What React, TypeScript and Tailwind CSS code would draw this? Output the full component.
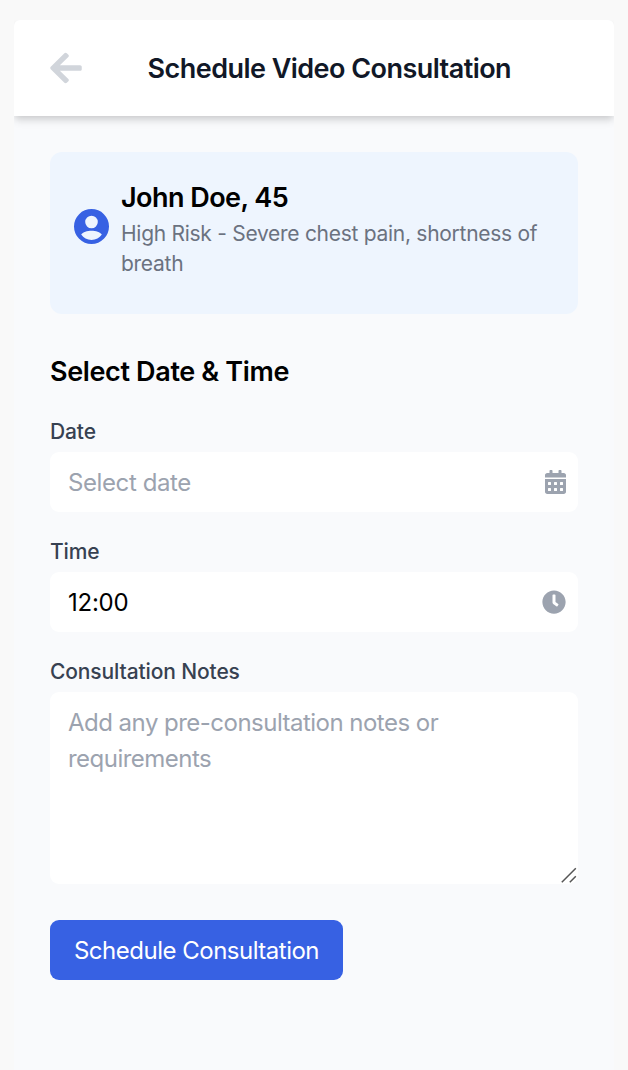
import { FaArrowLeft, FaCalendarAlt, FaClock } from "react-icons/fa";
import type { ReactNode } from "react";

function AccountIcon() {
  return (
    <svg viewBox="2 2 20 20" className="h-[35px] w-[35px] shrink-0 fill-[#3761e3]" aria-hidden="true">
      <path
        fillRule="evenodd"
        d="M12 2a10 10 0 1 0 0 20 10 10 0 0 0 0-20zM12 5.8a3.6 3.6 0 1 1 0 7.2 3.6 3.6 0 0 1 0-7.2zM6.1 16.6C7 15.1 9.6 14.4 12 14.4s5 .7 5.9 2.2C16.6 18.6 14.5 19.7 12 19.7s-4.6-1.1-5.9-3.1z"
      />
    </svg>
  );
}

function Field({ label, children }: { label: string; children: ReactNode }) {
  return (
    <label className="block">
      <span className="mb-[5px] block pt-px text-[21px] leading-[30px] font-medium tracking-[-0.12px] text-[#374151]">
        {label}
      </span>
      {children}
    </label>
  );
}

export default function App() {
  return (
    <div className="h-[1070px] overflow-hidden bg-[#f9f9f9] px-3.5 pt-5 font-['Inter',sans-serif] text-black">
      <div className="h-full rounded-t-[6px] bg-[#f9fafc]">
        <header className="flex h-24 items-center rounded-t-[6px] bg-white px-9 shadow-[0_6px_9px_-1.5px_rgba(0,0,0,0.1),0_3px_6px_-1.5px_rgba(0,0,0,0.1)] [clip-path:inset(0_0_-24px_0)]">
          <FaArrowLeft className="h-9 w-8 shrink-0 text-[#d1d5db]" />
          <h1 className="ml-[65.5px] pt-0.5 text-[27px] leading-[42px] font-semibold tracking-[-0.54px] whitespace-nowrap text-[#111827]">
            Schedule Video Consultation
          </h1>
        </header>
        <main className="px-9 pt-9">
          <section className="flex h-[162px] items-start rounded-xl bg-[#eef5fe] px-6 pt-6">
            <div className="pt-[33px]">
              <AccountIcon />
            </div>
            <div className="ml-3 pt-px">
              <h2 className="text-[27px] leading-[42px] font-semibold tracking-[-0.54px]">John Doe, 45</h2>
              <p className="text-[21px] leading-[30px] tracking-[-0.28px] text-[#6b7280]">
                High Risk - Severe chest pain, shortness of breath
              </p>
            </div>
          </section>
          <h2 className="mt-9 mb-[23px] pt-px text-[27px] leading-[42px] font-semibold tracking-[-0.36px]">
            Select Date &amp; Time
          </h2>
          <form className="flex flex-col gap-6">
            <Field label="Date">
              <span className="flex h-[60px] items-center rounded-[9px] bg-white pr-3 pl-[18px]">
                <input
                  placeholder="Select date"
                  className="min-w-0 flex-1 pt-0.5 text-[24px] leading-9 tracking-[-0.4px] outline-none placeholder:text-[#9ca3af]"
                />
                <FaCalendarAlt className="h-6 w-[21px] text-[#9ca3af]" />
              </span>
            </Field>
            <Field label="Time">
              <span className="flex h-[60px] items-center rounded-[9px] bg-white pr-3 pl-[18px]">
                <input
                  defaultValue="12:00"
                  className="min-w-0 flex-1 pt-0.5 text-[24px] leading-9 tracking-[-0.25px] outline-none"
                />
                <FaClock className="h-6 w-6 text-[#9ca3af]" />
              </span>
            </Field>
            <Field label="Consultation Notes">
              <span className="relative block h-48">
                <textarea
                  placeholder="Add any pre-consultation notes or requirements"
                  className="block h-48 w-full resize-none rounded-[9px] bg-white px-[18px] pt-[13px] pb-3 text-[24px] leading-9 tracking-[-0.52px] outline-none placeholder:text-[#9ca3af]"
                />
                <svg
                  viewBox="0 0 16 16"
                  className="absolute right-px bottom-px h-4 w-4 fill-none stroke-[#555555] stroke-[1.5]"
                  aria-hidden="true"
                >
                  <path d="M0.8 15.2L14.8 1.2M8.8 15.2L14.8 9.2" />
                </svg>
              </span>
            </Field>
            <button
              type="button"
              className="mt-3 h-[60px] w-[293px] rounded-[9px] bg-[#3761e3] pt-0.5 text-[24px] leading-9 tracking-[-0.5px] whitespace-nowrap text-white"
            >
              Schedule Consultation
            </button>
          </form>
        </main>
      </div>
    </div>
  );
}
